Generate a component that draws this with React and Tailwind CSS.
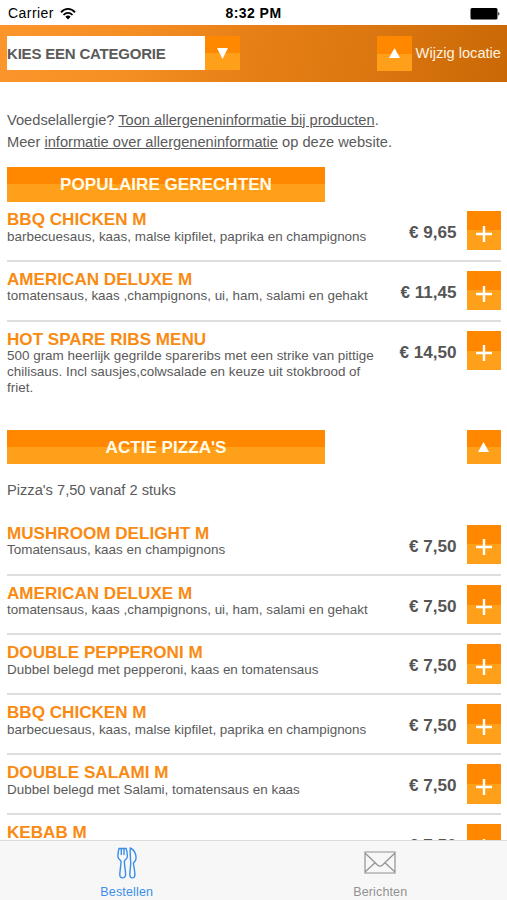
const popular = [
  { name: 'BBQ CHICKEN M', text: 'barbecuesaus, kaas, malse kipfilet, paprika en champignons', price: '€ 9,65' },
  { name: 'AMERICAN DELUXE M', text: 'tomatensaus, kaas ,champignons, ui, ham, salami en gehakt', price: '€ 11,45' },
  {
    name: 'HOT SPARE RIBS MENU',
    text: '500 gram heerlijk gegrilde spareribs met een strike van pittige chilisaus. Incl sausjes,colwsalade en keuze uit stokbrood of friet.',
    price: '€ 14,50',
  },
];

const pizzas = [
  { name: 'MUSHROOM DELIGHT M', text: 'Tomatensaus, kaas en champignons', price: '€ 7,50' },
  { name: 'AMERICAN DELUXE M', text: 'tomatensaus, kaas ,champignons, ui, ham, salami en gehakt', price: '€ 7,50' },
  { name: 'DOUBLE PEPPERONI M', text: 'Dubbel belegd met pepperoni, kaas en tomatensaus', price: '€ 7,50' },
  { name: 'BBQ CHICKEN M', text: 'barbecuesaus, kaas, malse kipfilet, paprika en champignons', price: '€ 7,50' },
  { name: 'DOUBLE SALAMI M', text: 'Dubbel belegd met Salami, tomatensaus en kaas', price: '€ 7,50' },
  { name: 'KEBAB M', text: '', price: '€ 7,50' },
];

const twoTone = 'bg-[linear-gradient(#ff8800_0_50%,#ffa01a_50%_100%)]';

function Triangle({ down }) {
  return (
    <svg viewBox="0 0 12 10" className={down ? 'h-[11px] w-[11px]' : 'h-[10px] w-[11px]'} fill="#fff" preserveAspectRatio="none">
      <path d={down ? 'M0 0h12L6 10z' : 'M6 0l6 10H0z'} />
    </svg>
  );
}

function Item({ item }) {
  return (
    <li className="flex min-h-[59.85px] items-start border-b-2 border-[#dedede] pt-[9px] last:border-transparent">
      <div className="w-[375px] text-[#5a5a5a]">
        <h3 className="text-[17.1px] leading-[17px] font-bold text-[#f98a12]">{item.name}</h3>
        <p className="pt-[0.6px] text-[13.45px] leading-[15.8px]">{item.text}</p>
      </div>
      <span className="flex-1 pt-[12px] pr-[10px] text-right text-[17.1px] leading-[20px] font-bold whitespace-nowrap text-[#555]">{item.price}</span>
      <button className={`flex h-[39.5px] w-[34.5px] shrink-0 items-center justify-center pt-[6px] ${twoTone}`}>
        <svg viewBox="0 0 16 16" className="h-[16px] w-[16px]" stroke="#fff" strokeWidth="2.4">
          <path d="M8 0v16M0 8h16" />
        </svg>
      </button>
    </li>
  );
}

function Heading({ children }) {
  return (
    <h2 className={`flex h-[34.5px] w-[318px] items-center justify-center pt-[1px] text-[17.1px] font-bold text-[#fffbe8] ${twoTone}`}>{children}</h2>
  );
}

export default function App() {
  return (
    <div className="flex h-[900px] w-[507px] flex-col overflow-hidden bg-white font-['Liberation_Sans',Arial,sans-serif] text-[#5a5a5a]">
      <div className="grid h-[25px] shrink-0 grid-cols-3 items-center px-[8px] pt-[2px] text-[14px] text-black">
        <div className="flex items-center gap-[6px]">
          <span className="tracking-[0.45px]">Carrier</span>
          <svg viewBox="0 0 16 12" className="h-[12px] w-[16px]" fill="none" stroke="#000" strokeWidth="1.8">
            <path d="M1 4.3C5-.2 11-.2 15 4.3M3.5 7c2.6-2.8 6.4-2.8 9 0" />
            <path d="M5.4 8.7c1.5-1.5 3.7-1.5 5.2 0L8 11.6z" fill="#000" stroke="none" />
          </svg>
        </div>
        <span className="text-center font-bold tracking-[0.45px] whitespace-nowrap">8:32 PM</span>
        <svg viewBox="0 0 30 12" className="-mr-[1px] h-[12px] w-[30px] justify-self-end">
          <rect x="0.5" y="0" width="27" height="11.500" rx="1.500" />
          <path d="M28.300 3.800q2.200 2 0 4z" />
        </svg>
      </div>

      <header className="flex h-[56.5px] shrink-0 items-center bg-[linear-gradient(100deg,#fc952b_0%,#f58e23_25%,#e67f15_50%,#da7610_75%,#c96805_100%)] pr-[6px] pl-[7px]">
        <div className="flex h-[34px] w-[198px] items-center bg-white pt-[1px] text-[15px] font-bold tracking-[-0.2px] whitespace-nowrap text-[#5a5a5a]">KIES EEN CATEGORIE</div>
        <button className={`flex h-[34px] w-[34.5px] items-center justify-center ${twoTone}`}>
          <Triangle down />
        </button>
        <button className={`ml-auto flex h-[34.5px] w-[34.5px] items-center justify-center ${twoTone}`}>
          <Triangle />
        </button>
        <span className="pt-[1px] pl-[4px] text-[14.65px] whitespace-nowrap text-[#fff3e0]">Wijzig locatie</span>
      </header>

      <main className="min-h-0 flex-1 overflow-hidden px-[7px] pt-[27px]">
        <p className="text-[14.65px] leading-[22.2px] whitespace-nowrap">
          Voedselallergie? <a className="underline">Toon allergeneninformatie bij producten</a>.
          <br />
          Meer <a className="underline">informatie over allergeneninformatie</a> op deze website.
        </p>
        <div className="mt-[14.5px] w-[494px]">
          <Heading>POPULAIRE GERECHTEN</Heading>
          <ul>
            {popular.map((item) => (
              <Item key={item.name} item={item} />
            ))}
          </ul>
        </div>
        <div className="mt-[32px] w-[494px]">
          <div className="flex justify-between">
            <Heading>ACTIE PIZZA'S</Heading>
            <button className={`flex h-[34.5px] w-[34.5px] items-center justify-center ${twoTone}`}>
              <Triangle />
            </button>
          </div>
          <p className="mt-[15px] text-[14.65px] leading-[22px]">Pizza's 7,50 vanaf 2 stuks</p>
          <ul className="mt-[14.6px]">
            {pizzas.map((item) => (
              <Item key={item.name} item={item} />
            ))}
          </ul>
        </div>
      </main>

      <nav className="grid h-[60px] shrink-0 grid-cols-2 border-t border-[#dcdcdc] bg-[#f7f7f7] text-[12.5px] leading-[14px] tracking-[0.15px]">
        <a className="flex flex-col items-center text-[#3b8fe8]">
          <svg viewBox="0 0 20 32" className="mt-[6px] h-[32px] w-[20px]" fill="none" stroke="currentColor" strokeWidth="1.4" strokeLinejoin="round" strokeLinecap="round">
            <path d="M2 1.500C1.200 4.500.8 8 1 10c.2 1.900 2.700 3 3 4.200.3 2-1.200 10-1.200 13.300 0 4.500 5.800 4.500 5.800 0 0-3.300-1.500-11.300-1.200-13.300.2-1.200 2.700-2.300 2.900-4.200.2-2-.3-5.500-1.100-8.500M2 1.500h7.200M4.300 1.500v6M7 1.500v6" />
            <path d="M13.300 1c4 2 5.800 6 5.800 10 0 2.300-1.300 4-2.700 5 .1 2.500 1.500 8 1.500 11.500 0 4.500-5.100 4.500-5.100 0 0-3.500.9-8.500.9-11.500-.1-4-.8-10-.4-15z" />
          </svg>
          <span className="mt-[6px]">Bestellen</span>
        </a>
        <a className="flex flex-col items-center text-[#929292]">
          <svg viewBox="0 0 32 23" className="mt-[10px] h-[23px] w-[32px]" fill="none" stroke="currentColor" strokeWidth="1.2">
            <path d="M1 1h30v21H1zM1 2l12.500 12q2.500 2.200 5 0L31 2M1 21l10-9.300M31 21l-10-9.300" />
          </svg>
          <span className="mt-[11px]">Berichten</span>
        </a>
      </nav>
    </div>
  );
}
